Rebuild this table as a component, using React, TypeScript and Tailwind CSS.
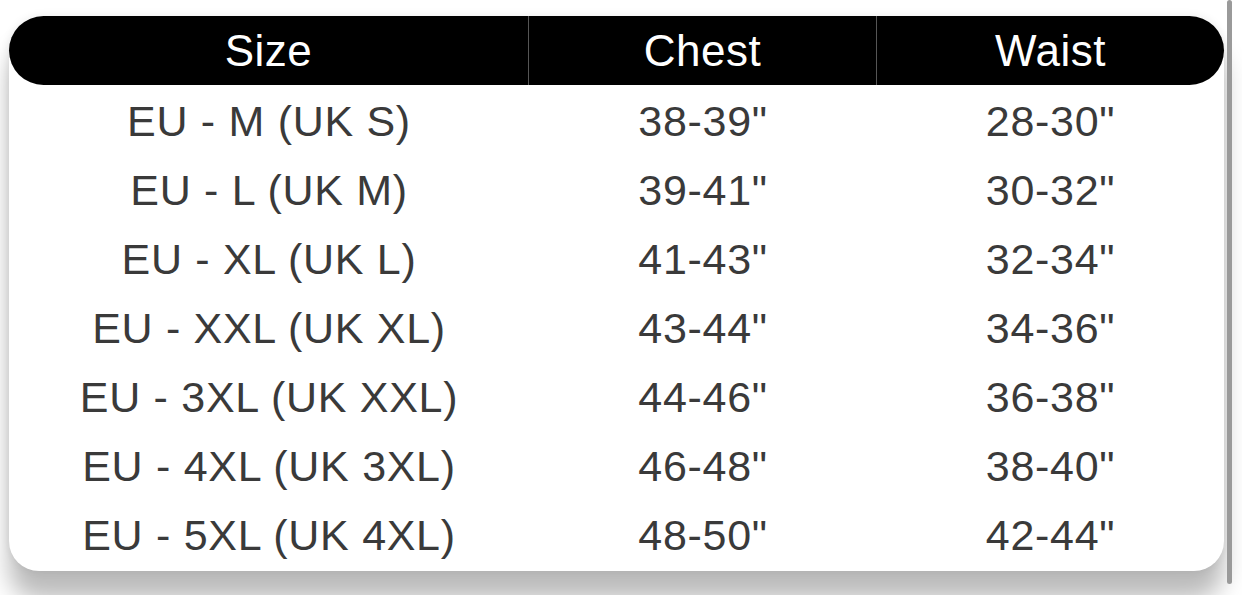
const rows = [
  ["EU - M (UK S)", "38-39\"", "28-30\""],
  ["EU - L (UK M)", "39-41\"", "30-32\""],
  ["EU - XL (UK L)", "41-43\"", "32-34\""],
  ["EU - XXL (UK XL)", "43-44\"", "34-36\""],
  ["EU - 3XL (UK XXL)", "44-46\"", "36-38\""],
  ["EU - 4XL (UK 3XL)", "46-48\"", "38-40\""],
  ["EU - 5XL (UK 4XL)", "48-50\"", "42-44\""],
];

export default function App() {
  return (
    <div
      className="relative h-[595px] w-[1242px] overflow-hidden bg-white"
      style={{ fontFamily: '"Liberation Sans", Arial, sans-serif' }}
    >
      <div className="ml-[9px] mt-[16px] w-[1215px] rounded-b-[30px] rounded-t-[34px] bg-white shadow-[0_28px_24px_rgba(0,0,0,0.27),0_0_10px_rgba(0,0,0,0.08)]">
        {/* header */}
        <div className="grid h-[69px] grid-cols-[520px_348px_1fr] rounded-full bg-black text-[44px] tracking-[0.5px] text-white">
          <div className="flex items-center justify-center border-r border-[#555]">Size</div>
          <div className="flex items-center justify-center border-r border-[#555]">Chest</div>
          <div className="flex items-center justify-center">Waist</div>
        </div>

        {/* rows */}
        <div className="pb-[3px] text-[43px] tracking-[0.7px] text-[#3a3a3a]">
          {rows.map((r) => (
            <div key={r[0]} className="grid h-[69px] grid-cols-[520px_348px_1fr] items-center pt-[4px]">
              <div className="text-center">{r[0]}</div>
              <div className="text-center">{r[1]}</div>
              <div className="text-center">{r[2]}</div>
            </div>
          ))}
        </div>
      </div>

      {/* scrollbar */}
      <div className="absolute left-[1227px] top-0 h-[584px] w-[5px] rounded-full bg-[#9a9a9a]" />
    </div>
  );
}
